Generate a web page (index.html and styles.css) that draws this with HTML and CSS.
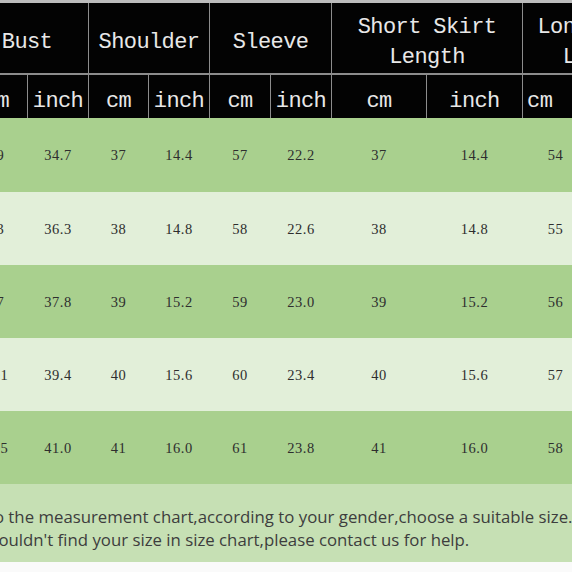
FILE: index.html
```html
<!DOCTYPE html>
<html lang="en">
<head>
<meta charset="utf-8">
<title>Size Chart</title>
<link rel="stylesheet" href="styles.css">
</head>
<body>
<div class="viewport">
  <table class="chart">
    <colgroup>
      <col class="col-size">
      <col class="col-bust-cm">
      <col class="col-std">
      <col class="col-sh-cm">
      <col class="col-std">
      <col class="col-std">
      <col class="col-std">
      <col class="col-skirt-cm">
      <col class="col-skirt-in">
      <col class="col-long-cm">
      <col class="col-long-in">
    </colgroup>
    <thead>
      <tr class="head-main">
        <th rowspan="2">Size</th>
        <th colspan="2">Bust</th>
        <th colspan="2">Shoulder</th>
        <th colspan="2">Sleeve</th>
        <th colspan="2">Short Skirt Length</th>
        <th colspan="2">Long Skirt Length</th>
      </tr>
      <tr class="head-unit">
        <th>cm</th><th>inch</th>
        <th>cm</th><th>inch</th>
        <th>cm</th><th>inch</th>
        <th>cm</th><th>inch</th>
        <th class="unit-left">cm</th><th>inch</th>
      </tr>
    </thead>
    <tbody>
      <tr class="row-dark">
        <td>S</td><td>89</td><td>34.7</td><td>37</td><td>14.4</td><td>57</td><td>22.2</td><td>37</td><td>14.4</td><td>54</td><td>21.3</td>
      </tr>
      <tr class="row-light">
        <td>M</td><td>93</td><td>36.3</td><td>38</td><td>14.8</td><td>58</td><td>22.6</td><td>38</td><td>14.8</td><td>55</td><td>21.7</td>
      </tr>
      <tr class="row-dark">
        <td>L</td><td>97</td><td>37.8</td><td>39</td><td>15.2</td><td>59</td><td>23.0</td><td>39</td><td>15.2</td><td>56</td><td>22.0</td>
      </tr>
      <tr class="row-light">
        <td>XL</td><td>101</td><td>39.4</td><td>40</td><td>15.6</td><td>60</td><td>23.4</td><td>40</td><td>15.6</td><td>57</td><td>22.4</td>
      </tr>
      <tr class="row-dark">
        <td>XXL</td><td>105</td><td>41.0</td><td>41</td><td>16.0</td><td>61</td><td>23.8</td><td>41</td><td>16.0</td><td>58</td><td>22.8</td>
      </tr>
    </tbody>
    <tfoot>
      <tr class="notes">
        <td colspan="11">
          <div class="note-line">Please refer to the measurement chart,according to your gender,choose a suitable size.</div>
          <div class="note-line note-second">If you couldn't find your size in size chart,please contact us for help.</div>
        </td>
      </tr>
    </tfoot>
  </table>
</div>
</body>
</html>
```

FILE: styles.css
```css
html, body {
  margin: 0;
  padding: 0;
  background: #fafafa;
}

.viewport {
  width: 572px;
  height: 572px;
  overflow: hidden;
  border-top: 3px solid #bcbcbc;
  box-sizing: border-box;
}

.chart {
  border-collapse: collapse;
  table-layout: fixed;
  width: 793px;
  margin-left: -115px;
}

.col-size { width: 80px; }
.col-bust-cm { width: 62px; }
.col-std { width: 61px; }
.col-sh-cm { width: 60px; }
.col-skirt-cm { width: 95px; }
.col-skirt-in { width: 96px; }
.col-long-cm { width: 66px; }
.col-long-in { width: 90px; }

.chart th {
  background: #030303;
  color: #e8e8e8;
  font-family: "Liberation Mono", monospace;
  font-weight: normal;
  font-size: 22px;
  letter-spacing: -0.6px;
  line-height: 30px;
  border: 1px solid #8c8c8c;
  padding: 0;
  text-align: center;
  vertical-align: middle;
}

.head-main th {
  height: 58px;
  padding-top: 10px;
  border-top: none;
  border-bottom: 2px solid #8c8c8c;
}

.head-unit th {
  height: 32px;
  padding-top: 11px;
  border-bottom: none;
}

.chart th.unit-left {
  text-align: left;
  padding-left: 4px;
}

.chart td {
  padding: 0;
  height: 73px;
  text-align: center;
  vertical-align: middle;
  font-family: "Liberation Serif", serif;
  font-size: 14.5px;
  letter-spacing: 0.5px;
  line-height: 18px;
  color: #2e2e2e;
}

.row-dark td {
  background: #a9d08e;
}

.row-light td {
  background: #e2efd9;
}

.notes td {
  background: #c6e0b4;
  height: 78px;
  box-sizing: border-box;
  padding: 22px 0 11px 5px;
  text-align: left;
  font-family: "Open Sans", sans-serif;
  font-size: 16.8px;
  letter-spacing: 0;
  line-height: 22.5px;
  color: #3d3d3d;
  white-space: nowrap;
}

.note-second {
  padding-left: 52px;
}
```
